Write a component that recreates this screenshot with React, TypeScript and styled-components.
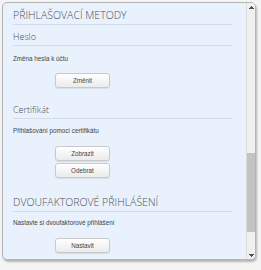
import React from 'react';
import styled, { createGlobalStyle } from 'styled-components';

const GlobalStyle = createGlobalStyle`
  html, body {
    margin: 0;
    padding: 0;
    background: #f4f4f4;
  }
`;

const Page = styled.div`
  width: 261px;
  height: 270px;
  padding: 2px 0 0 2px;
  box-sizing: border-box;
`;

const Panel = styled.div`
  display: flex;
  width: 254px;
  height: 258px;
  box-sizing: border-box;
  border: 1px solid #b4b4b4;
  border-radius: 5px;
  background: #e8f1fc;
  box-shadow: 1px 2px 2px rgba(0, 0, 0, 0.25);
  overflow: hidden;
`;

const Content = styled.div`
  flex: 1;
  min-width: 0;
  padding: 0 14px 0 10px;
`;

const ScrollTrack = styled.div`
  display: flex;
  flex-direction: column;
  width: 8px;
  background: #f0f0f0;
  border-left: 1px solid #dcdcdc;
`;

const ScrollArrow = styled.div<{ $down?: boolean }>`
  height: 8px;
  flex: none;
  background-repeat: no-repeat;
  background-position: center;
  background-size: 5px 3px;
  background-image: ${(p) =>
    p.$down
      ? 'conic-gradient(from -45deg at 50% 100%, #505050 90deg, transparent 0)'
      : 'conic-gradient(from 135deg at 50% 0, #505050 90deg, transparent 0)'};
`;

const ScrollArea = styled.div`
  flex: 1;
  display: flex;
  flex-direction: column;
`;

const Thumb = styled.div`
  flex: none;
  background: #c3c3c3;
`;

const Heading = styled.h2<{ $top: number }>`
  margin: ${(p) => p.$top}px 0 0;
  padding-bottom: 2px;
  border-bottom: 1px solid #d3dde8;
  font-family: 'Open Sans', sans-serif;
  font-weight: 300;
  font-size: 10.5px;
  line-height: 14px;
  color: #505050;
  white-space: nowrap;
`;

const SubHeading = styled.h3<{ $top: number }>`
  margin: ${(p) => p.$top}px 0 0;
  padding-bottom: 2px;
  border-bottom: 1px solid #d3dde8;
  font-family: 'Open Sans', sans-serif;
  font-weight: 300;
  font-size: 9px;
  line-height: 12px;
  color: #505050;
`;

const Note = styled.p<{ $top: number }>`
  margin: ${(p) => p.$top}px 0 0;
  font-family: 'Liberation Sans', Arial, sans-serif;
  font-size: 6.3px;
  line-height: 10px;
  color: #444;
`;

const Buttons = styled.div<{ $top: number }>`
  display: flex;
  flex-direction: column;
  gap: 2px;
  margin: ${(p) => p.$top}px 0 0 42px;
`;

const Button = styled.button`
  width: 55px;
  height: 15px;
  padding: 0;
  box-sizing: border-box;
  border: 1px solid #c9c9c9;
  border-radius: 3px;
  background: linear-gradient(#ffffff, #ebebeb);
  box-shadow: 0 1px 1px rgba(0, 0, 0, 0.08);
  font-family: 'Liberation Sans', Arial, sans-serif;
  font-size: 6.3px;
  color: #444;
`;

// scroll state of the panel: visible part vs whole list
const scroll = { top: 460, visible: 256, total: 778 };

function ScrollBar(): JSX.Element {
  const track = scroll.visible - 16;
  const thumb = Math.round((scroll.visible / scroll.total) * track);
  const offset = Math.round((scroll.top / scroll.total) * track);
  return (
    <ScrollTrack>
      <ScrollArrow />
      <ScrollArea>
        <Thumb style={{ marginTop: offset, height: thumb }} />
      </ScrollArea>
      <ScrollArrow $down />
    </ScrollTrack>
  );
}

export default function App(): JSX.Element {
  return (
    <Page>
      <GlobalStyle />
      <Panel>
        <Content>
          <Heading $top={5}>PŘIHLAŠOVACÍ METODY</Heading>
          <SubHeading $top={6}>Heslo</SubHeading>
          <Note $top={8}>Změna hesla k účtu</Note>
          <Buttons $top={9}>
            <Button>Změnit</Button>
          </Buttons>

          <SubHeading $top={16}>Certifikát</SubHeading>
          <Note $top={7}>Přihlašování pomocí certifikátu</Note>
          <Buttons $top={10}>
            <Button>Zobrazit</Button>
            <Button>Odebrat</Button>
          </Buttons>

          <Heading $top={17}>DVOUFAKTOROVÉ PŘIHLÁŠENÍ</Heading>
          <Note $top={6}>Nastavte si dvoufaktorové přihlášení</Note>
          <Buttons $top={10}>
            <Button>Nastavit</Button>
          </Buttons>
        </Content>
        <ScrollBar />
      </Panel>
    </Page>
  );
}
